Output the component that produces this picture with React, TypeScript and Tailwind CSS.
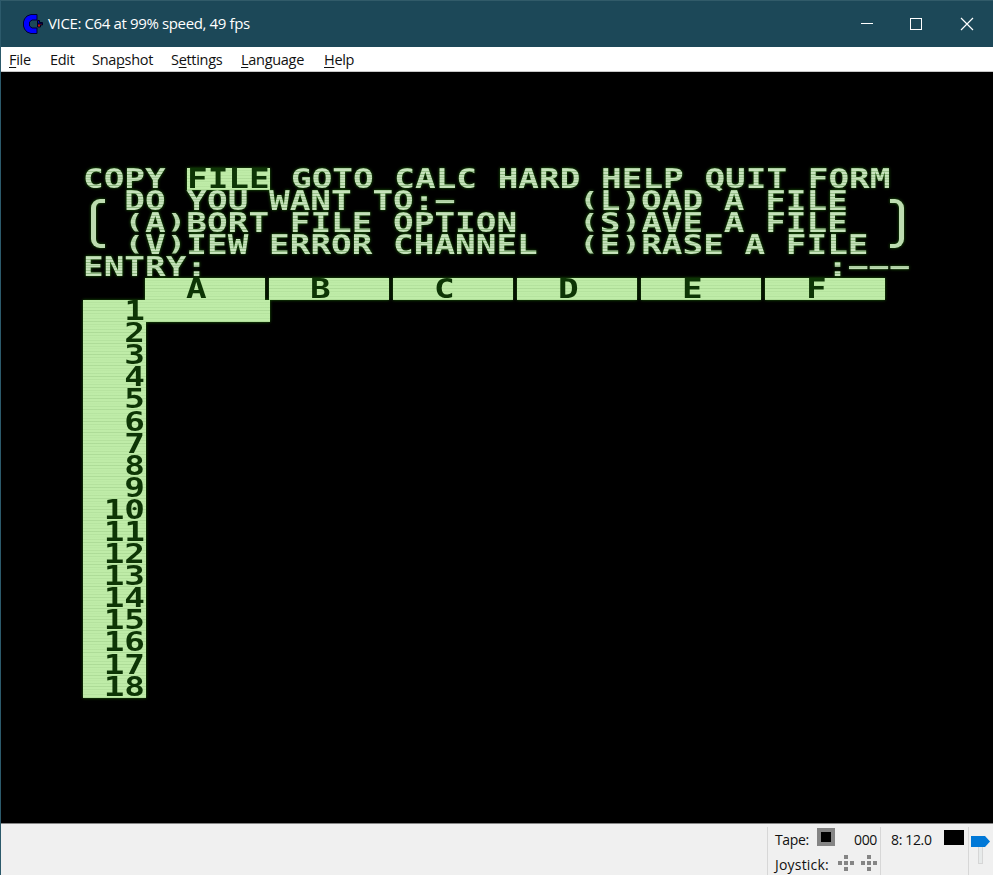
import React from "react";

const PROMPT_ROWS = [
  "COPY FILE GOTO CALC HARD HELP QUIT FORM",
  "  DO YOU WANT TO:−      (L)OAD A FILE",
  "  (A)BORT FILE OPTION   (S)AVE A FILE",
  "  (V)IEW ERROR CHANNEL  (E)RASE A FILE",
  "ENTRY:                              :−−−",
];

const COLUMNS = ["A", "B", "C", "D", "E", "F"];
const ROW_NUMBERS = Array.from({ length: 18 }, (_, i) => i + 1);

const cellText =
  "block w-max origin-left scale-x-[1.3205] whitespace-pre font-['DejaVu_Sans_Mono','Liberation_Mono',monospace] text-[26px] leading-[22.1px] font-bold";
const litText =
  "bg-[repeating-linear-gradient(180deg,#c8e4bd_0px,#c8e4bd_1.3px,#8ab57d_2.2px,#c8e4bd_2.7625px)] bg-clip-text text-transparent";
const litBlock =
  "bg-[repeating-linear-gradient(180deg,#bfeca8_0px,#bfeca8_1.6px,#addb97_2.2px,#bfeca8_2.7625px)]";
const glow = "[filter:blur(0.6px)_drop-shadow(0_0_1.5px_#1d6508)]";

function MenuItem({ before = "", hot, after, width }: { before?: string; hot: string; after: string; width: string }) {
  return (
    <span className={`block shrink-0 whitespace-nowrap ${width}`}>
      {before}
      <span className="underline decoration-1 underline-offset-2">{hot}</span>
      {after}
    </span>
  );
}

function TitleBar() {
  return (
    <header className="flex h-[47px] shrink-0 items-center border-t border-[#315b69] bg-[#1c4858] pl-[21px] text-white">
      <svg width="22" height="22" viewBox="0 0 22 22" className="shrink-0">
        <path d="M15 1.5H9L5 3 2.5 6 1.5 9v4l1 3L5 19l4 1.500h6v-5.500h-5L7.500 13V9L10 7h5z" fill="#0000ff" stroke="#000030" />
        <path d="M15.500 7.500h2v2h3v1.500h-5z" fill="#0000b8" stroke="#000020" />
        <path d="M15.500 11h5v1h-2v2h-3z" fill="#c81010" stroke="#000020" />
      </svg>
      <span className="-mt-[2px] ml-[4px] w-[650px] whitespace-nowrap text-[15px] tracking-[-0.37px]">VICE: C64 at 99% speed, 49 fps</span>
      <svg width="120" height="20" viewBox="0 0 120 20" className="ml-auto mr-[15px] shrink-0" fill="none" stroke="white">
        <path d="M3 9.5h12" />
        <rect x="52.5" y="4.5" width="11" height="11" />
        <path d="M103 4l12 12M115 4l-12 12" strokeWidth="1.2" />
      </svg>
    </header>
  );
}

/* Parentheses in the character set are no taller than the capitals. */
function PromptText({ text }: { text: string }) {
  return (
    <span className={cellText}>
      {text.split(/([()])/).map((part, i) => (
        <span
          key={i}
          className={`${litText} ${part === "(" || part === ")" ? "inline-block h-[22.1px] origin-[50%_20%] scale-y-[0.86]" : ""}`}
        >
          {part}
        </span>
      ))}
    </span>
  );
}

function SheetHeader() {
  return (
    <div className="flex h-[22.1px] pl-[62px]">
      {COLUMNS.map((c) => (
        <div key={c} className="flex w-[124px]">
          <div className={`h-[22.1px] w-[119.5px] pl-[41px] text-[#0d3505] ${litBlock}`}>
            <span className={cellText}>{c}</span>
          </div>
        </div>
      ))}
    </div>
  );
}

function Screen() {
  return (
    <main className="h-[751px] shrink-0 bg-black pl-[82px] pt-[96px]">
      <div className={`relative w-[828px] ${glow}`}>
        {PROMPT_ROWS.map((row, i) => (
          <div key={i} className="h-[22.1px]">
            {i === 0 ? (
              <div className="-mt-[0.5px] flex">
                <span className="w-[104.3px]"><PromptText text="COPY" /></span>
                <span className={`h-[22.1px] w-[83px] text-[#0d3505] ${litBlock}`}><span className={cellText}>FILE</span></span>
                <span className="pl-[20.7px]"><PromptText text={row.slice(10)} /></span>
              </div>
            ) : (
              <PromptText text={row} />
            )}
          </div>
        ))}
        <SheetHeader />
        {ROW_NUMBERS.map((n) => (
          <div key={n} className="flex h-[22.1px]">
            <div className={`w-[62.5px] text-[#0d3505] ${litBlock}`}>
              <span className={cellText}>{String(n).padStart(3)}</span>
            </div>
            {n === 1 && <div className={`w-[124px] ${litBlock}`} />}
          </div>
        ))}
        <div className="absolute left-[8px] top-[31px] h-[49px] w-[14px] rounded-l-[9px] border-y-[4px] border-l-[5px] border-[#bddcb0]" />
        <div className="absolute left-[807px] top-[31px] h-[49px] w-[14px] rounded-r-[9px] border-y-[4px] border-r-[5px] border-[#bddcb0]" />
      </div>
    </main>
  );
}

function Joystick() {
  return (
    <svg width="16" height="16" viewBox="0 0 16 16" fill="#858585">
      <path d="M6 0h4v4H6zM0 6h4v4H0zM6 6h4v4H6zM12 6h4v4h-4zM6 12h4v4H6z" />
    </svg>
  );
}

function StatusBar() {
  return (
    <footer className="flex h-[52px] shrink-0 border-t border-[#858585] bg-[#f0f0f0] pt-[3px] text-[14px] leading-[25px] tracking-[-0.35px] text-[#111]">
      <div className="w-[767px] shrink-0 border-r border-[#d7d7d7]" />
      <div className="w-[113px] shrink-0 border-r border-[#d7d7d7] pl-[7px]">
        <div className="flex h-[24px]">
          <span className="w-[42px]">Tape:</span>
          <span className="mt-px h-[18px] w-[18px] border-[4px] border-[#858585] bg-black" />
          <span className="ml-[19px]">000</span>
        </div>
        <div className="flex h-[24px]">
          <span className="w-[63px] pt-px tracking-[0.2px]">Joystick:</span>
          <span className="flex gap-[7px] pt-[4px]"><Joystick /><Joystick /></span>
        </div>
      </div>
      <div className="flex w-[88px] shrink-0 border-r border-[#d7d7d7] pl-[10px]">
        <span className="w-[53px] whitespace-nowrap">8: 12.0</span>
        <span className="mt-[3px] h-[15px] w-[20px] bg-black" />
      </div>
      <svg width="23" height="40" viewBox="0 0 23 40">
        <rect x="9.500" y="17.500" width="4" height="19" fill="#e7eaea" stroke="#d6d6d6" />
        <path d="M2 9h14l5 5.500-5 5.500H2z" fill="#0078d7" />
      </svg>
    </footer>
  );
}

export default function App() {
  return (
    <div className="flex h-[875px] w-[993px] flex-col overflow-hidden border-l border-[#2c5a6b] bg-[#f0f0f0] font-['Open_Sans','Noto_Sans',sans-serif]">
      <TitleBar />
      <nav className="flex h-[25px] shrink-0 border-b border-[#c8c8c8] bg-white pl-[8px] text-[14.5px] leading-[25px] tracking-[-0.3px] text-[#111]">
        <MenuItem hot="F" after="ile" width="w-[41px]" />
        <span className="w-[42px]">Edit</span>
        <MenuItem before="Sna" hot="p" after="shot" width="w-[79px]" />
        <MenuItem before="S" hot="e" after="ttings" width="w-[70px]" />
        <MenuItem hot="L" after="anguage" width="w-[83px]" />
        <MenuItem hot="H" after="elp" width="w-[50px]" />
      </nav>
      <Screen />
      <StatusBar />
    </div>
  );
}
